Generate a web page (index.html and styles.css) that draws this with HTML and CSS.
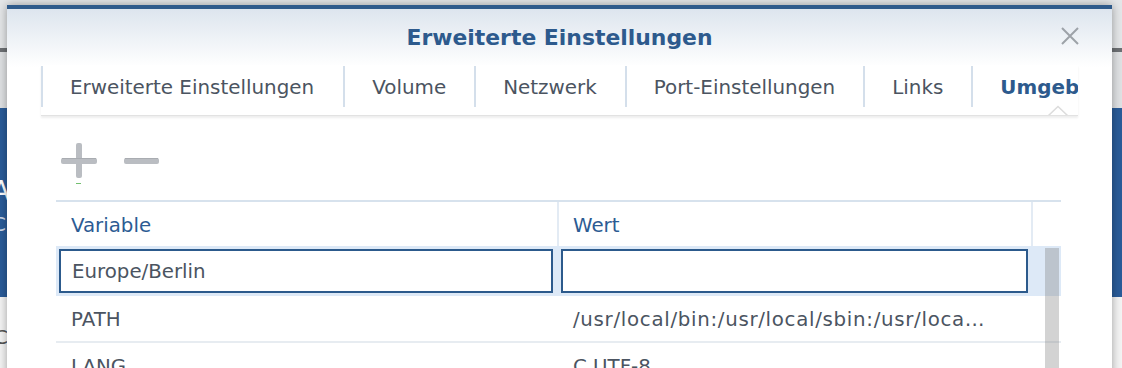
FILE: index.html
```html
<!DOCTYPE html>
<html lang="de">
<head>
    <meta charset="UTF-8">
    <meta name="viewport" content="width=device-width, initial-scale=1.0">
    <title>Erweiterte Einstellungen</title>
    <link rel="stylesheet" href="styles.css">
</head>
<body>
    <!-- page behind the dialog -->
    <div class="desk">
        <div class="desk-top"></div>
        <div class="desk-rule"></div>
        <div class="desk-sub"></div>
        <div class="desk-band">
            <span class="band-big">A</span>
            <span class="band-small">C</span>
        </div>
        <div class="desk-rest"><span>C</span></div>
    </div>

    <div class="dialog">
        <div class="dialog-head">
            <h1>Erweiterte Einstellungen</h1>
            <span class="close">
                <svg width="20" height="20" viewBox="0 0 20 20">
                    <path d="M2 2 L18 18 M18 2 L2 18" stroke="#9da2a8" stroke-width="2" fill="none"/>
                </svg>
            </span>
        </div>

        <div class="tabs">
            <div class="tab">Erweiterte Einstellungen</div>
            <div class="tab">Volume</div>
            <div class="tab">Netzwerk</div>
            <div class="tab">Port-Einstellungen</div>
            <div class="tab">Links</div>
            <div class="tab active">Umgebung</div>
            <svg class="notch" width="24" height="12" viewBox="0 0 24 12">
                <path d="M0 11 L2 11 L12 1.5 L22 11 L24 11 L24 12 L0 12 Z" fill="#fff"/>
                <path d="M0 11 L2 11 L12 1.5 L22 11 L24 11" stroke="#dcdcdc" stroke-width="1.5" fill="none"/>
            </svg>
        </div>

        <div class="content">
            <div class="toolbar">
                <span class="tool">
                    <svg width="36" height="35" viewBox="0 0 36 35">
                        <rect x="0" y="15" width="36" height="6" rx="2" fill="#babdc2"/>
                        <rect x="15" y="0" width="6" height="35" rx="2" fill="#babdc2"/>
                        <rect x="1" y="15" width="34" height="1" fill="#a9acb1"/>
                    </svg>
                    <span class="focus-dash"></span>
                </span>
                <span class="tool">
                    <svg width="35" height="35" viewBox="0 0 35 35">
                        <rect x="0" y="15" width="35" height="6" rx="2" fill="#babdc2"/>
                        <rect x="1" y="15" width="33" height="1" fill="#a9acb1"/>
                    </svg>
                </span>
            </div>

            <div class="grid">
                <div class="grid-head">
                    <div class="cell">Variable</div>
                    <div class="cell">Wert</div>
                    <div class="cell"></div>
                </div>
                <div class="grid-row editing">
                    <div class="cell"><div class="edit">Europe/Berlin</div></div>
                    <div class="cell"><div class="edit"></div></div>
                    <div class="cell"></div>
                </div>
                <div class="grid-row">
                    <div class="cell">PATH</div>
                    <div class="cell path">/usr/local/bin:/usr/local/sbin:/usr/loca…</div>
                    <div class="cell"></div>
                </div>
                <div class="grid-row">
                    <div class="cell">LANG</div>
                    <div class="cell">C.UTF-8</div>
                    <div class="cell"></div>
                </div>
                <div class="scroll"></div>
            </div>
        </div>
    </div>
</body>
</html>
```

FILE: styles.css
```css
html, body {
    margin: 0;
    height: 368px;
    overflow: hidden;
}
body {
    font-family: "DejaVu Sans", Verdana, sans-serif;
    position: relative;
    background-color: #f2f2f2;
}

/* background page */
.desk {
    display: flex;
    flex-direction: column;
    height: 368px;
}
.desk-top {
    height: 48px;
    background-color: #e4e6e8;
}
.desk-rule {
    height: 4px;
    background-color: #6d7074;
}
.desk-sub {
    height: 56px;
    background-color: #dfe1e3;
}
.desk-band {
    height: 189px;
    background-color: #2a5c99;
    color: #fff;
    position: relative;
}
.band-big {
    position: absolute;
    left: -8px;
    top: 68px;
    font-size: 26px;
}
.band-small {
    position: absolute;
    left: -8px;
    top: 104px;
    font-size: 20px;
    color: #c9d6e6;
}
.desk-rest {
    flex: 1;
    background-color: #f4f4f4;
    color: #555;
    font-size: 20px;
    position: relative;
}
.desk-rest span {
    position: absolute;
    left: -6px;
    top: 28px;
}

/* dialog window */
.dialog {
    position: absolute;
    left: 7px;
    top: 5px;
    width: 1105px;
    height: 420px;
    background: linear-gradient(#dde5ee, #ffffff 58px);
    border-top: 4px solid #2e5a8b;
    box-shadow: 0 0 9px rgba(0, 0, 0, 0.35);
}
.dialog-head {
    height: 56px;
    display: flex;
    align-items: center;
    justify-content: center;
    position: relative;
}
.dialog-head h1 {
    margin: 0;
    font-size: 21.9px;
    font-weight: bold;
    color: #2d5a8d;
}
.close {
    position: absolute;
    right: 32px;
    top: 17px;
    line-height: 0;
}

/* tab strip */
.tabs {
    position: relative;
    margin: 0 34px;
    height: 50px;
    display: flex;
    background-color: #fff;
    border-bottom: 1px solid #e2e2e2;
    box-shadow: 0 2px 2px rgba(0, 0, 0, 0.07);
    overflow: hidden;
    white-space: nowrap;
}
.tab {
    margin-top: 1px;
    height: 41px;
    display: flex;
    align-items: center;
    padding: 1px 28px 0 27px;
    box-sizing: border-box;
    border-left: 2px solid #d4dfeb;
    font-size: 19.9px;
    color: #4b5461;
}
.tab:first-child {
    padding-right: 29px;
}
.tab.active {
    font-weight: bold;
    color: #2d5a8d;
}
.notch {
    position: absolute;
    left: 1005px;
    top: 40px;
}

/* grid */
.content {
    padding: 0 51px 0 49px;
}
.toolbar {
    height: 84px;
    display: flex;
    align-items: flex-start;
    gap: 27px;
    padding-left: 5px;
}
.tool {
    position: relative;
    margin-top: 27px;
    line-height: 0;
}
.focus-dash {
    position: absolute;
    left: 15px;
    top: 40px;
    width: 5px;
    height: 1px;
    background-color: #72bf6f;
}
.grid {
    position: relative;
    border-top: 2px solid #d7e2ed;
    font-size: 19.8px;
    color: #4b5461;
}
.grid-head, .grid-row {
    display: grid;
    grid-template-columns: 501px 474px 30px;
}
.grid-head {
    height: 44px;
}
.grid-head .cell {
    color: #2c5b93;
    padding-top: 3px;
    border-left: 2px solid #e3ebf4;
}
.grid-head .cell:first-child {
    border-left: none;
}
.cell {
    display: flex;
    align-items: center;
    padding-left: 14px;
    white-space: nowrap;
    overflow: hidden;
}
.grid-head .cell:first-child,
.grid-row .cell:first-child {
    padding-left: 15px;
}
.grid-row {
    height: 45px;
    border-bottom: 2px solid #e7ecf1;
}
.grid-row .cell {
    padding-top: 1px;
}
.grid-row .cell:nth-child(2) {
    padding-left: 16px;
}
.grid-row .path {
    letter-spacing: 0.7px;
}
.grid-row.editing {
    height: 50px;
    border-bottom: none;
    background-color: #dde9f7;
}
.grid-row.editing .cell {
    padding: 3px 4px 3px 3px;
}
.grid-row.editing .cell:nth-child(2) {
    padding: 3px 3px 3px 4px;
}
.edit {
    box-sizing: border-box;
    width: 100%;
    height: 44px;
    border: 2px solid #2c5a8c;
    background-color: #fff;
    padding-left: 11px;
    display: flex;
    align-items: center;
}
.scroll {
    position: absolute;
    left: 989px;
    top: 46px;
    width: 14px;
    height: 200px;
    background-color: rgba(120, 120, 120, 0.33);
}
```
